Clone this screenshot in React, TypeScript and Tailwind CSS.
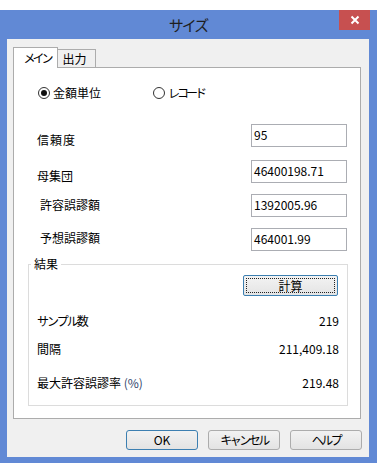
const font = "font-['Noto_Sans_CJK_JP','Noto_Sans',sans-serif]";

function Radio({ checked, label, width, narrow }: { checked?: boolean; label: string; width?: string; narrow?: boolean }) {
  return (
    <div className={`flex items-center ${width ?? ""}`}>
      <span className="flex h-[12px] w-[12px] items-center justify-center rounded-full border border-[#333] bg-white">
        {checked && <span className="h-[6px] w-[6px] rounded-full bg-[#111]" />}
      </span>
      <span className={`ml-[3px] text-[12px] leading-[16px] text-black ${narrow ? "tracking-[-3px]" : ""}`}>{label}</span>
    </div>
  );
}

function Field({ label, value, pad }: { label: string; value: string; pad: string }) {
  return (
    <div className="flex items-start">
      <div className={`w-[214px] text-[12px] leading-[16px] text-black ${pad}`}>{label}</div>
      <div className="h-[23px] w-[96px] border border-[#abadb3] bg-white pl-[2px] pt-[3px] text-[12px] leading-[14px] text-black">
        {value}
      </div>
    </div>
  );
}

function DialogButton({ label, primary, narrow }: { label: string; primary?: boolean; narrow?: boolean }) {
  return (
    <button
      className={`h-[20px] w-[72px] rounded-[3px] border bg-gradient-to-b from-[#f2f2f2] to-[#e3e3e3] text-[12px] leading-[16px] text-black ${
        primary ? "border-[#3c7fb1]" : "border-[#acacac]"
      } ${narrow ? "tracking-[-2.5px]" : ""}`}
    >
      {label}
    </button>
  );
}

export default function App() {
  return (
    <div className={`h-[463px] w-[377px] overflow-hidden bg-white pt-[10px] ${font}`}>
      <div className="flex h-[453px] flex-col bg-[#6189d5] pl-[7px] pr-[8px]">
        <div className="relative flex h-[29px] shrink-0 items-center justify-center">
          <span className="text-[15px] leading-[18px] tracking-[-2px] text-[#1e1e1e]">サイズ</span>
          <div className="absolute right-[-1px] top-0 flex h-[20px] w-[31px] items-center justify-center bg-[#c75050]">
            <svg width="10" height="10" viewBox="0 0 10 10">
              <path d="M1.5 1.5 L8.5 8.5 M8.5 1.5 L1.5 8.5" stroke="#fff" strokeWidth="2" />
            </svg>
          </div>
        </div>

        <div className="flex h-[418px] flex-col bg-[#f0f0f0] pl-[6px] pr-[8px] pt-[8px]">
          <div className="relative z-10 mb-[-1px] flex h-[21px] items-end">
            <div className="flex h-[21px] w-[45px] items-center justify-center border border-b-0 border-[#acacac] bg-white pl-[3px] text-[12px] leading-[16px] tracking-[-3px] text-black">
              メイン
            </div>
            <div className="mb-[1px] flex h-[18px] w-[38px] items-center justify-center border-r border-t border-[#acacac] bg-[#f0f0f0] pr-[4px] text-[12px] leading-[16px] text-black">
              出力
            </div>
          </div>

          <div className="flex h-[352px] w-[348px] flex-col border border-[#acacac] bg-white">
            <div className="mt-[17px] flex h-[16px] items-center pl-[24px]">
              <Radio checked label="金額単位" width="w-[115px]" />
              <Radio label="レコード" narrow />
            </div>

            <div className="mt-[23px] pl-[23px]">
              <Field label="信頼度" value="95" pad="pt-[8px] tracking-[1px]" />
            </div>
            <div className="mt-[12px] pl-[23px]">
              <Field label="母集団" value="46400198.71" pad="pt-[8px]" />
            </div>
            <div className="mt-[10px] pl-[23px]">
              <Field label="許容誤謬額" value="1392005.96" pad="pl-[3px] pt-[3px]" />
            </div>
            <div className="mt-[11px] pl-[23px]">
              <Field label="予想誤謬額" value="464001.99" pad="pl-[3px] pt-[2px]" />
            </div>

            <div className="relative ml-[14px] mt-[13px] flex h-[142px] w-[320px] flex-col border border-[#dcdcdc]">
              <span className="absolute left-[2px] top-[-9px] bg-white px-[3px] text-[12px] leading-[16px] text-black">
                結果
              </span>
              <div className="ml-[214px] mt-[10px] flex h-[21px] w-[95px] items-center justify-center rounded-[2px] border border-[#3c7fb1] bg-gradient-to-b from-[#f3f3f3] to-[#e4e4e4] p-[2px]">
                <div className="flex h-full w-full items-center justify-center border border-dotted border-[#222] text-[12px] leading-[16px] text-black">
                  計算
                </div>
              </div>
              <div className="mt-[17px] flex h-[16px] items-center justify-between pl-[8px] pr-[8px] text-[12px] leading-[16px] text-black">
                <span className="tracking-[-2px]">サンプル数</span>
                <span>219</span>
              </div>
              <div className="mt-[12px] flex h-[16px] items-center justify-between pl-[8px] pr-[8px] text-[12px] leading-[16px] text-black">
                <span>間隔</span>
                <span>211,409.18</span>
              </div>
              <div className="mt-[18px] flex h-[16px] items-center justify-between pl-[8px] pr-[8px] text-[12px] leading-[16px] text-black">
                <span>
                  最大許容誤謬率 <span className="text-[#33466b]">(%)</span>
                </span>
                <span>219.48</span>
              </div>
            </div>
          </div>

          <div className="mr-[-1px] mt-[11px] flex justify-end gap-[10px]">
            <DialogButton label="OK" primary />
            <DialogButton label="キャンセル" narrow />
            <DialogButton label="ヘルプ" narrow />
          </div>
        </div>
      </div>
    </div>
  );
}
